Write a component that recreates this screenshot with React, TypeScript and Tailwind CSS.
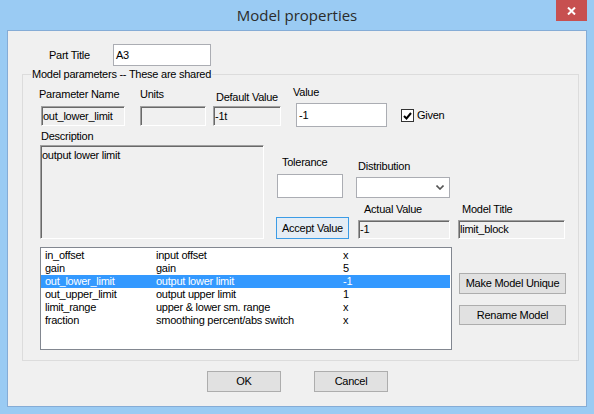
import React from 'react';

const Label = ({ children, className = '' }: { children: React.ReactNode; className?: string }) => (
  <div className={`h-[13px] leading-[13px] whitespace-nowrap ${className}`}>{children}</div>
);

// sunken read-only field, classic win32 look
const Static = ({ value, className = '' }: { value?: string; className?: string }) => (
  <div
    className={`flex items-center pl-[1px] bg-[#f0f0f0] border border-t-[#a0a0a0] border-l-[#a0a0a0] border-r-white border-b-white shadow-[inset_1px_1px_0_#696969] leading-[13px] whitespace-nowrap overflow-hidden ${className}`}
  >
    {value}
  </div>
);

const Edit = ({ value, className = '' }: { value?: string; className?: string }) => (
  <div className={`flex items-center pl-[2px] bg-white border border-[#abadb3] leading-[13px] whitespace-nowrap ${className}`}>
    {value}
  </div>
);

const Button = ({ label, className = '', primary = false }: { label: string; className?: string; primary?: boolean }) => (
  <button
    className={`flex items-center justify-center leading-[13px] whitespace-nowrap bg-[#e1e1e1] border ${
      primary ? 'border-[#3c9ce6] bg-[#e5edf5]' : 'border-[#adadad]'
    } ${className}`}
  >
    {label}
  </button>
);

const PARAMS = [
  { name: 'in_offset', desc: 'input offset', val: 'x' },
  { name: 'gain', desc: 'gain', val: '5' },
  { name: 'out_lower_limit', desc: 'output lower limit', val: '-1' },
  { name: 'out_upper_limit', desc: 'output upper limit', val: '1' },
  { name: 'limit_range', desc: 'upper & lower sm. range', val: 'x' },
  { name: 'fraction', desc: 'smoothing percent/abs switch', val: 'x' },
];

export default function App() {
  const selected = 'out_lower_limit';

  return (
    <div className="w-[594px] h-[414px] bg-[#9acbf3] flex flex-col font-['Liberation_Sans',Arial,sans-serif] text-[11px] tracking-[-0.25px] text-black">
      {/* title bar */}
      <div className="h-[30px] grid grid-cols-[1fr_auto_1fr]">
        <div />
        <div className="pt-[5px] text-[15px] leading-[20px] tracking-normal text-[#2b2b2b] font-['Open_Sans','Noto_Sans',sans-serif]">
          Model properties
        </div>
        <div className="flex justify-end">
          <div className="mr-[7px] w-[31px] h-[21px] bg-[#c75050] flex items-center justify-center">
            <svg width="9" height="8" viewBox="0 0 9 8">
              <path d="M1 0.5 L8 7.5 M8 0.5 L1 7.5" stroke="white" strokeWidth="2" />
            </svg>
          </div>
        </div>
      </div>

      {/* client area */}
      <div className="ml-[7px] w-[580px] h-[377px] border border-[#85acd6] bg-[#f0f0f0] flex flex-col">
        <div className="mt-[13px] flex items-center h-[22px]">
          <Label className="ml-[41px] w-[64px]">Part Title</Label>
          <Edit value="A3" className="w-[98px] h-[22px]" />
        </div>

        <div className="mt-[8px] ml-[14px] w-[557px] h-[287px] border border-[#dcdcdc] relative flex flex-col">
          <div className="absolute left-[8px] top-[-7px] px-[1px] bg-[#f0f0f0] leading-[13px] whitespace-nowrap">
            Model parameters -- These are shared
          </div>

          {/* section 1 */}
          <div className="flex items-start h-[55px] shrink-0">
            <div className="ml-[16px] w-[86px] mt-[13px] flex flex-col">
              <Label>Parameter Name</Label>
              <Static value="out_lower_limit" className="ml-[2px] mt-[5px] w-[84px] h-[20px]" />
            </div>
            <div className="ml-[15px] w-[66px] mt-[13px] flex flex-col">
              <Label>Units</Label>
              <Static className="mt-[5px] w-[66px] h-[20px]" />
            </div>
            <div className="ml-[7px] w-[71px] mt-[16px] flex flex-col">
              <Label className="ml-[3px]">Default Value</Label>
              <Static value="-1t" className="mt-[2px] w-[68px] h-[20px]" />
            </div>
            <div className="ml-[9px] w-[94px] mt-[11px] flex flex-col">
              <Label>Value</Label>
              <Edit value="-1" className="ml-[3px] mt-[4px] w-[91px] h-[24px]" />
            </div>
            <div className="ml-[14px] mt-[34px] flex items-center gap-[3px]">
              <div className="w-[13px] h-[13px] bg-white border border-[#333333] flex items-center justify-center">
                <svg width="9" height="8" viewBox="0 0 9 8">
                  <path d="M1 4 L3.5 6.5 L8 1" stroke="black" strokeWidth="2" fill="none" />
                </svg>
              </div>
              <Label>Given</Label>
            </div>
          </div>

          {/* section 2 */}
          <div className="flex items-start h-[109px] shrink-0">
            <div className="ml-[17px] flex flex-col">
              <Label className="ml-[1px]">Description</Label>
              <Static className="mt-[2px] w-[224px] h-[94px] !items-start pt-[3px]" value="output lower limit" />
            </div>
            <div className="ml-[12px] flex flex-col">
              <div className="flex items-start h-[68px]">
                <div className="ml-[1px] w-[66px] flex flex-col">
                  <Label className="ml-[5px] mt-[26px]">Tolerance</Label>
                  <Edit className="mt-[5px] w-[66px] h-[24px]" />
                </div>
                <div className="ml-[13px] flex flex-col">
                  <Label className="ml-[2px] mt-[30px]">Distribution</Label>
                  <div className="mt-[4px] w-[94px] h-[21px] bg-white border border-[#abadb3] flex items-center justify-end pr-[5px]">
                    <svg width="8" height="5" viewBox="0 0 8 5">
                      <path d="M0.5 0.5 L4 4 L7.5 0.5" stroke="#555555" strokeWidth="1.6" fill="none" />
                    </svg>
                  </div>
                </div>
              </div>
              <div className="flex items-start">
                <Button label="Accept Value" primary className="mt-[19px] w-[73px] h-[22px]" />
                <div className="ml-[9px] w-[92px] flex flex-col">
                  <Label className="ml-[6px] mt-[5px]">Actual Value</Label>
                  <Static value="-1" className="mt-[4px] w-[92px] h-[19px]" />
                </div>
                <div className="ml-[8px] flex flex-col">
                  <Label className="ml-[4px] mt-[5px]">Model Title</Label>
                  <Static value="limit_block" className="mt-[4px] w-[107px] h-[19px]" />
                </div>
              </div>
            </div>
          </div>

          {/* section 3 */}
          <div className="flex items-start">
            <div className="ml-[17px] mt-[8px] w-[412px] h-[103px] bg-white border border-[#828790] pt-[1px] pr-[1px] flex flex-col">
              {PARAMS.map((p) => (
                <div
                  key={p.name}
                  className={`flex h-[13px] leading-[13px] whitespace-nowrap ${
                    p.name === selected ? 'bg-[#3399ff] text-white' : ''
                  }`}
                >
                  <div className="pl-[4px] w-[115px]">{p.name}</div>
                  <div className="w-[187px]">{p.desc}</div>
                  <div>{p.val}</div>
                </div>
              ))}
            </div>
            <div className="ml-[7px] mt-[34px] flex flex-col">
              <Button label="Make Model Unique" className="w-[107px] h-[21px]" />
              <Button label="Rename Model" className="mt-[11px] w-[107px] h-[20px]" />
            </div>
          </div>
        </div>

        <div className="mt-[10px] flex">
          <Button label="OK" className="ml-[199px] w-[74px] h-[21px]" />
          <Button label="Cancel" className="ml-[33px] w-[74px] h-[21px]" />
        </div>
      </div>
    </div>
  );
}
